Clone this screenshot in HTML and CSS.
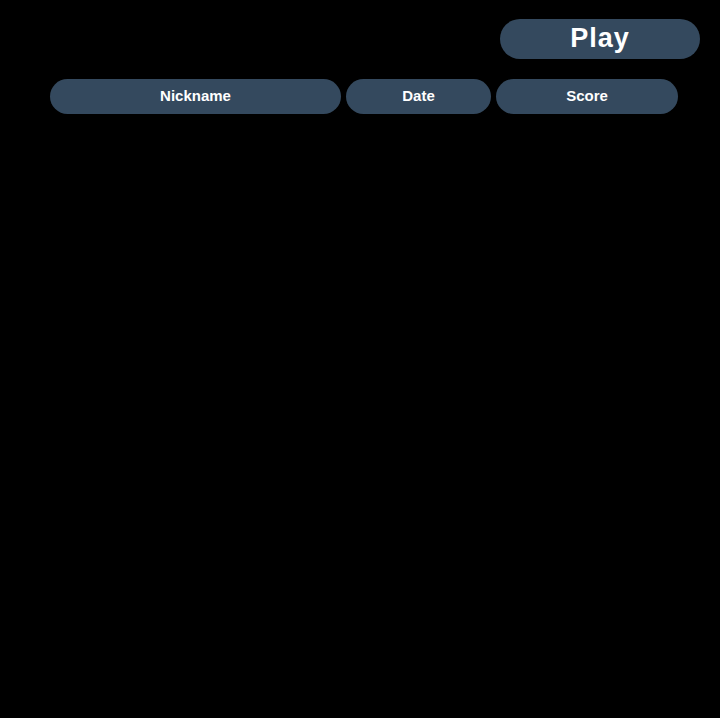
FILE: index.html
```html
<!DOCTYPE html>
<html>
<head>
<meta charset="utf-8">
<link rel="stylesheet" href="styles.css">
</head>
<body>
<div class="page">
  <div class="topbar">
    <button class="play">Play</button>
  </div>
  <div class="header-row">
    <div class="col col-nick">Nickname</div>
    <div class="col col-date">Date</div>
    <div class="col col-score">Score</div>
  </div>
</div>
</body>
</html>
```

FILE: styles.css
```css
html, body {
  margin: 0;
  padding: 0;
  background: #000;
  height: 100%;
}
.page {
  font-family: "Liberation Sans", Arial, sans-serif;
  padding-top: 19px;
}
.topbar {
  display: flex;
  justify-content: flex-end;
  padding-right: 20px;
}
.play {
  box-sizing: border-box;
  width: 200px;
  height: 40px;
  border: none;
  border-radius: 20px;
  background: #34495e;
  color: #fff;
  font-family: "Liberation Sans", Arial, sans-serif;
  font-weight: bold;
  font-size: 27px;
  letter-spacing: 1px;
  padding: 0 0 2px 0;
  line-height: 36px;
}
.header-row {
  display: flex;
  gap: 5px;
  margin-top: 20px;
  padding-left: 50px;
}
.col {
  box-sizing: border-box;
  height: 35px;
  padding-bottom: 3px;
  border-radius: 17.5px;
  background: #34495e;
  color: #fff;
  font-weight: bold;
  font-size: 15px;
  display: flex;
  align-items: center;
  justify-content: center;
}
.col-nick { width: 291px; }
.col-date { width: 145px; }
.col-score { width: 182px; }
```
